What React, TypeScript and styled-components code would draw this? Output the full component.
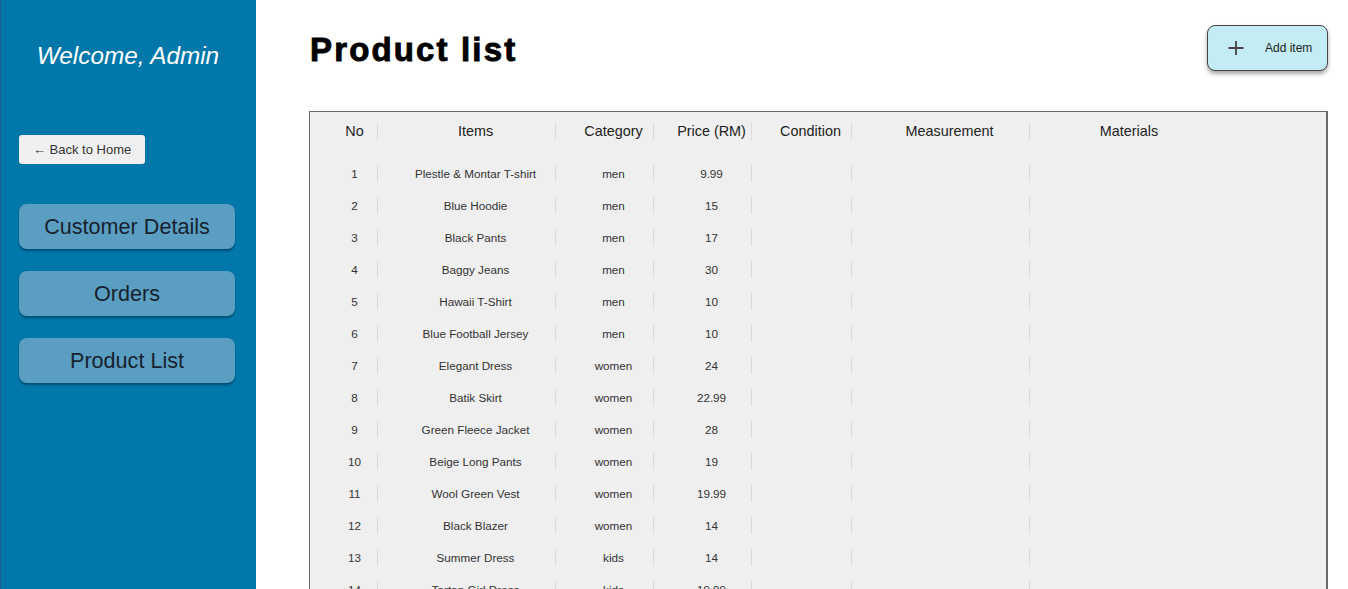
import React from "react";
import styled, { createGlobalStyle } from "styled-components";

const GlobalStyle = createGlobalStyle`
  html, body {
    margin: 0;
    padding: 0;
    overflow: hidden;
    background: #ffffff;
    font-family: "Liberation Sans", Arial, sans-serif;
  }
  * { box-sizing: border-box; }
`;

const Layout = styled.div`
  display: flex;
  width: 100vw;
  height: 100vh;
  overflow: hidden;
`;

const Sidebar = styled.aside`
  flex: 0 0 256px;
  height: 100%;
  background: #0277a9;
  border-left: 1px solid #1c5e92;
  padding: 42px 21px 0 18px;
  display: flex;
  flex-direction: column;
`;

const Welcome = styled.h2`
  margin: 0;
  font-size: 24.3px;
  font-weight: 400;
  font-style: italic;
  color: #ffffff;
  text-align: center;
  line-height: 28px;
  padding-left: 2px;
`;

const BackButton = styled.button`
  align-self: flex-start;
  margin-top: 65px;
  width: 126px;
  height: 29px;
  border: none;
  border-radius: 3px;
  background: #f0f0f0;
  color: #333;
  font-family: "Liberation Sans", Arial, sans-serif;
  font-size: 13px;
  text-align: left;
  padding: 0 0 0 14px;
`;

const Nav = styled.nav`
  margin-top: 40px;
  display: flex;
  flex-direction: column;
  gap: 22px;
`;

const NavButton = styled.button`
  width: 216px;
  height: 45px;
  border: none;
  border-radius: 8px;
  background: #5a9fc1;
  color: #18222e;
  font-family: "Liberation Sans", Arial, sans-serif;
  font-size: 21.6px;
  box-shadow: 0 2px 2px rgba(0, 30, 60, 0.45);
`;

const Main = styled.main`
  flex: 1;
  padding: 25px 20px 0 53px;
  display: flex;
  flex-direction: column;
  min-width: 0;
`;

const Header = styled.header`
  display: flex;
  justify-content: space-between;
  align-items: flex-start;
`;

const Title = styled.h1`
  margin: 6px 0 0 1px;
  font-size: 33px;
  line-height: 37px;
  font-weight: 700;
  letter-spacing: 2.15px;
  color: #000;
  -webkit-text-stroke: 0.9px #000;
`;

const AddButton = styled.button`
  width: 121px;
  height: 46px;
  display: flex;
  align-items: center;
  gap: 21px;
  padding: 0 0 0 20px;
  background: #c4ecf5;
  border: 1.5px solid #454545;
  border-radius: 8px;
  box-shadow: 0 3px 4px rgba(0, 0, 0, 0.35);
  color: #222;
  font-family: "Liberation Sans", Arial, sans-serif;
  font-size: 12px;
`;

const TableBox = styled.section`
  margin-top: 40px;
  flex: 1;
  background: #efefef;
  border: 1px solid #6a6a6a;
  border-right-width: 2px;
  border-bottom: none;
  padding-top: 4px;
`;

const Row = styled.div<{ $head?: boolean }>`
  display: grid;
  grid-template-columns: 46px 160px 80px 80px 82px 160px 162px;
  column-gap: 18px;
  padding-left: 22px;
  height: ${(p) => (p.$head ? "30px" : "32px")};
  align-items: center;
  margin-bottom: ${(p) => (p.$head ? "11px" : "0")};
  font-size: ${(p) => (p.$head ? "14.4px" : "11.7px")};
  color: ${(p) => (p.$head ? "#222" : "#333")};
`;

const Cell = styled.div<{ $last?: boolean }>`
  height: 17px;
  line-height: 17px;
  text-align: center;
  white-space: nowrap;
  border-right: ${(p) => (p.$last ? "none" : "1px solid #dadada")};
`;

const PlusIcon = () => (
  <svg width="16" height="16" viewBox="0 0 16 16" aria-hidden="true">
    <path d="M0.5 8h15M8 1v14" stroke="#444" strokeWidth="1.8" fill="none" />
  </svg>
);

const columns = ["No", "Items", "Category", "Price (RM)", "Condition", "Measurement", "Materials"];

const products: [string, string, string][] = [
  ["Plestle & Montar T-shirt", "men", "9.99"],
  ["Blue Hoodie", "men", "15"],
  ["Black Pants", "men", "17"],
  ["Baggy Jeans", "men", "30"],
  ["Hawaii T-Shirt", "men", "10"],
  ["Blue Football Jersey", "men", "10"],
  ["Elegant Dress", "women", "24"],
  ["Batik Skirt", "women", "22.99"],
  ["Green Fleece Jacket", "women", "28"],
  ["Beige Long Pants", "women", "19"],
  ["Wool Green Vest", "women", "19.99"],
  ["Black Blazer", "women", "14"],
  ["Summer Dress", "kids", "14"],
  ["Tartan Girl Dress", "kids", "19.99"],
];

export default function App() {
  return (
    <>
      <GlobalStyle />
      <Layout>
        <Sidebar>
          <Welcome>Welcome, Admin</Welcome>
          <BackButton>← Back to Home</BackButton>
          <Nav>
            <NavButton>Customer Details</NavButton>
            <NavButton>Orders</NavButton>
            <NavButton>Product List</NavButton>
          </Nav>
        </Sidebar>
        <Main>
          <Header>
            <Title>Product list</Title>
            <AddButton>
              <PlusIcon />
              <span>Add item</span>
            </AddButton>
          </Header>
          <TableBox>
            <Row $head>
              {columns.map((c, i) => (
                <Cell key={c} $last={i === columns.length - 1}>
                  {c}
                </Cell>
              ))}
            </Row>
            {products.map(([name, cat, price], i) => (
              <Row key={i}>
                <Cell>{i + 1}</Cell>
                <Cell>{name}</Cell>
                <Cell>{cat}</Cell>
                <Cell>{price}</Cell>
                <Cell></Cell>
                <Cell></Cell>
                <Cell $last></Cell>
              </Row>
            ))}
          </TableBox>
        </Main>
      </Layout>
    </>
  );
}
